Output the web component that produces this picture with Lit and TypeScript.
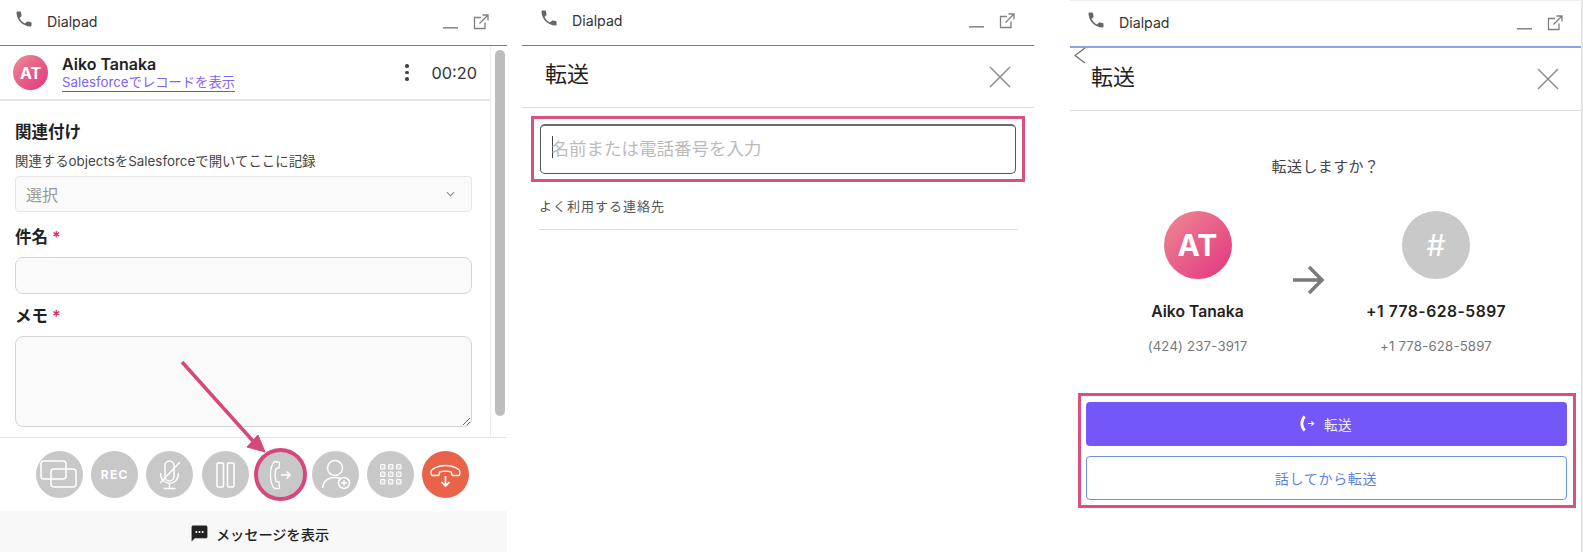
import { LitElement, html, css, svg } from "lit";
import { customElement } from "lit/decorators.js";

const phoneIcon = svg`<path d="M6.62 10.79c1.44 2.83 3.76 5.14 6.59 6.59l2.2-2.2c.27-.27.67-.36 1.02-.24 1.12.37 2.33.57 3.57.57.55 0 1 .45 1 1V20c0 .55-.45 1-1 1-9.39 0-17-7.61-17-17 0-.55.45-1 1-1h3.5c.55 0 1 .45 1 1 0 1.25.2 2.45.57 3.57.11.35.03.74-.25 1.02l-2.2 2.2z" fill="#666"/>`;

const titleBar = (cls: string) => html`
  <header class="titlebar ${cls}">
    <svg class="ph" viewBox="0 0 24 24" width="20" height="20">${phoneIcon}</svg>
    <span class="appname">Dialpad</span>
    <svg class="min" viewBox="0 0 15 3" width="15" height="3"><rect width="15" height="1.6" y="1" fill="#8a8a8a"/></svg>
    <svg class="ext" viewBox="0 0 16 16" width="16" height="16" fill="none" stroke="#808080" stroke-width="1.3">
      <path d="M8 3.5H1.5v11h10.5V8.5"/><path d="M6.5 9.5 14.5 1.5M9.5 1h5.5v5.5"/>
    </svg>
  </header>`;

const closeIcon = html`<svg class="close" viewBox="0 0 22 22" width="22" height="22" fill="none" stroke="#8c8c8c" stroke-width="1.5"><path d="M1 1 21 21M21 1 1 21"/></svg>`;

const ctrlIcons = [
  svg`<g fill="none" stroke="#fff" stroke-width="1.5"><rect x="5" y="10" width="25" height="18" rx="3"/><rect x="15" y="18" width="25" height="18" rx="3"/></g>`,
  null,
  svg`<g fill="none" stroke="#fff" stroke-width="1.4"><rect x="19" y="10" width="9" height="20" rx="4.5"/><path d="M14.5 22c0 14 18 14 18 0M23.5 32v5M17.5 37.5h12M14 32 34 11"/></g>`,
  svg`<g fill="none" stroke="#fff" stroke-width="1.5"><rect x="15" y="12" width="6.5" height="24" rx="1"/><rect x="25.5" y="12" width="6.5" height="24" rx="1"/></g>`,
  svg`<g fill="none" stroke="#fff" stroke-width="1.3"><path d="M21 11 17.5 10.5C15 13 13.5 18 13.5 24S15 35 17.5 37.5L21 37.5 22.5 37 22 31 19 30.5C18 27 18 21 19 17.5L22 17 22.5 11.5Z"/></g><path d="M24 24H33M29.5 20.5 33 24 29.5 27.5" fill="none" stroke="#fff" stroke-width="1.6"/>`,
  svg`<g fill="none" stroke="#fff" stroke-width="1.5"><circle cx="23" cy="17" r="7.5"/><path d="M10.5 37c1-7 6-10.5 12.5-10.5 2 0 4 .4 5.5 1"/><circle cx="32" cy="32" r="5.5"/><path d="M32 29.2v5.6M29.2 32h5.6"/></g>`,
  svg`<g fill="#fff" fill-opacity=".3" stroke="#fff" stroke-width="1.1">${[13.5, 21, 28.5].flatMap((y) => [13.5, 21.5, 29.5].map((x) => svg`<rect x="${x}" y="${y}" width="4.5" height="4.5" rx="1"/>`))}</g>`,
  svg`<g fill="none" stroke="#fff" stroke-width="1.4"><path d="M9 21c0-3 7-6.5 14.5-6.5S38 18 38 21c0 2-.5 3.5-1.5 3.5H31c-1 0-1.5-1-1.5-3.5-4-1.2-8-1.2-12 0 0 2.5-.5 3.5-1.5 3.5H10.5C9.5 24.5 9 23 9 21Z"/></g><path d="M23.5 25v10M19.5 31l4 4 4-4" fill="none" stroke="#fff" stroke-width="1.7"/>`,
];

@customElement("app-root")
export class AppRoot extends LitElement {
  static styles = css`
    :host {
      display: flex;
      width: 1583px;
      height: 552px;
      overflow: hidden;
      position: relative;
      background: #fff;
      font-family: Inter, "Noto Sans CJK JP", sans-serif;
      color: #222;
    }
    * { box-sizing: border-box; }
    .panel { display: flex; flex-direction: column; height: 552px; min-width: 0; flex: none; position: relative; }
    .p1 { width: 507px; }
    .p2 { width: 512px; margin-left: 15px; }
    .p3 { width: 513px; margin-left: 36px; border-top: 1px solid #eee; border-right: 2px solid #e4e4e4; }

    .titlebar { display: flex; align-items: center; flex: none; border-bottom: 1px solid #4f7fdc; position: relative; }
    .tb1 { height: 46px; padding: 0 18px 0 14px; }
    .tb2 { height: 46px; padding: 0 19px 2px 17px; }
    .tb3 { height: 47px; padding: 0 18px 0 16px; border-bottom: 2px solid #86a5e3; }
    .ph { flex: none; margin-top: -7px; }
    .appname { font-size: 14.2px; color: #333; margin: -2px 0 0 13px; flex: 1; }
    .min { margin-right: 15px; margin-top: 9px; }
    .ext { margin-top: -2px; }

    .workspace { display: flex; height: 391px; flex: none; }
    .main { flex: 1; min-width: 0; display: flex; flex-direction: column; }
    .scroll { width: 17px; flex: none; border-left: 1px solid #ececec; padding: 4px 0 0 4px; }
    .thumb { width: 10px; height: 366px; border-radius: 5px; background: #bdbdbd; }

    .callrow { height: 55px; flex: none; display: flex; align-items: center; padding: 0 13px; border-bottom: 2px solid #e6e6e6; }
    .avatar { border-radius: 50%; display: flex; align-items: center; justify-content: center; color: #fff; font-weight: 700; background: linear-gradient(135deg, #ee8a92, #e2347f); flex: none; }
    .a-sm { width: 35px; height: 35px; font-size: 16px; }
    .who { margin-left: 14px; flex: 1; display: flex; flex-direction: column; }
    .who b { font-size: 16px; line-height: 20px; margin-top: 1px; font-weight: 600; color: #222; }
    .who a { font-size: 13.3px; line-height: 17px; color: #7f63f5; border-bottom: 1px solid #6a4df5; align-self: flex-start; }
    .dots { display: flex; flex-direction: column; gap: 3px; margin-right: 23px; }
    .dots i { width: 3.5px; height: 3.5px; border-radius: 50%; background: #444; display: block; }
    .time { font-size: 16.3px; color: #333; }

    .form { padding: 21px 18px 0 15px; display: flex; flex-direction: column; }
    .lab { font-size: 16.5px; font-weight: 600; line-height: 20px; color: #222; }
    .lab em { color: #d92d5c; font-style: normal; margin-left: 4px; font-size: 16px; }
    .sub { font-size: 13.4px; line-height: 18px; margin-top: 10px; color: #444; white-space: nowrap; }
    .select { height: 36px; margin-top: 6px; border: 1px solid #e6e6e6; background: #fafafa; border-radius: 4px; display: flex; align-items: center; justify-content: space-between; padding: 0 16px 0 10px; font-size: 16px; color: #999; }
    .inp { height: 37px; margin-top: 10px; border: 1px solid #d4d4d4; background: #fafafa; border-radius: 8px; display: block; width: 100%; outline: none; }
    .lab-a { margin-top: 15px; }
    .lab-b { margin-top: 12px; }
    textarea.inp { height: 91px; margin-top: 10px; resize: both; }

    .controls { flex: none; height: 60px; border-top: 1px solid #e4e4e4; display: flex; align-items: flex-start; gap: 8.2px; padding: 13px 0 0 36px; }
    .cb { width: 47px; height: 47px; border-radius: 50%; background: #c8c8c8; flex: none; display: flex; align-items: center; justify-content: center; color: #fff; font-size: 12px; font-weight: 700; letter-spacing: 1.2px; }
    .cb.red { background: #e8634a; }
    .cb.hl { outline: 4px solid #d5487e; outline-offset: -1px; }
    .footer { flex: none; height: 41px; margin-top: 14px; background: #f8f8f8; display: flex; align-items: center; justify-content: center; gap: 7px; font-size: 14.2px; font-weight: 500; color: #222; padding: 4px 0 0 12px; }
    .arrow { position: absolute; left: 170px; top: 350px; pointer-events: none; }

    .dlghead { flex: none; display: flex; align-items: center; justify-content: space-between; border-bottom: 1px solid #dedede; }
    .p2 .dlghead { height: 62px; padding: 0 23px 0 23px; }
    .p3 .dlghead { height: 63px; padding: 0 22px 0 21px; }
    .dlghead h2 { font-size: 22px; font-weight: 400; margin: 0; color: #222; }
    .p2 .dlghead h2 { margin-top: -10px; }
    .p3 .dlghead h2 { margin-top: -8px; }
    .pinkbox { border: 3.5px solid #d84f80; background: #fff; }
    .searchbox { margin: 8px 9px 0 9px; padding: 5px 6px 5px 5.5px; }
    .search { height: 50px; border: 1px solid #555; border-top: 2px solid #6a6a6a; border-radius: 5px; display: flex; align-items: center; padding: 0 0 5px 11px; font-size: 17.5px; color: #bbb; }
    .caret { width: 1px; height: 22px; background: #444; margin-right: -1px; }
    .freq { margin: 0 16px 0 17px; height: 48px; border-bottom: 1px solid #dedede; display: flex; align-items: center; font-size: 13px; color: #555; letter-spacing: 1px; }

    .back { position: absolute; left: 3px; top: 46px; }
    .ask { text-align: center; font-size: 15px; color: #444; margin: 46px 0 0 0; line-height: 20px; letter-spacing: .4px; }
    .parties { display: flex; margin-top: 34px; padding-left: 33.5px; }
    .party { display: flex; flex-direction: column; align-items: center; }
    .pa { width: 188px; }
    .pb { width: 225px; }
    .a-lg { width: 68px; height: 68px; font-size: 30px; }
    .hash { background: #c9c9c9; font-weight: 400; font-size: 30px; }
    .party b { font-size: 15.7px; line-height: 20px; font-weight: 600; margin-top: 23px; white-space: nowrap; color: #222; }
    .pb b { letter-spacing: .5px; }
    .party span { font-size: 13.2px; line-height: 18px; margin-top: 15px; color: #777; white-space: nowrap; letter-spacing: .2px; }
    .midgap { display: flex; width: 32px; flex: none; align-items: flex-start; padding-top: 53px; }
    .btnbox { margin: 38px 5px 0 8px; padding: 5.5px 6.5px 5.5px 4.5px; display: flex; flex-direction: column; gap: 10px; }
    .btn { height: 44px; border-radius: 4px; display: flex; align-items: center; justify-content: center; gap: 9px; font-size: 13.5px; letter-spacing: .6px; }
    .primary { background: #7556f6; color: #eee; }
    .ghost { border: 1px solid #6f8fe8; color: #5f83e4; font-size: 14px; letter-spacing: .7px; }
  `;

  render() {
    return html`
      <section class="panel p1">
        ${titleBar("tb1")}
        <div class="workspace">
          <div class="main">
            <div class="callrow">
              <div class="avatar a-sm">AT</div>
              <div class="who"><b>Aiko Tanaka</b><a>Salesforceでレコードを表示</a></div>
              <div class="dots"><i></i><i></i><i></i></div>
              <div class="time">00:20</div>
            </div>
            <div class="form">
              <div class="lab">関連付け</div>
              <div class="sub">関連するobjectsをSalesforceで開いてここに記録</div>
              <div class="select">選択
                <svg viewBox="0 0 10 6" width="9" height="6" fill="none" stroke="#888" stroke-width="1.2"><path d="M1 1 5 5 9 1"/></svg>
              </div>
              <div class="lab lab-a">件名<em>*</em></div>
              <input class="inp" />
              <div class="lab lab-b">メモ<em>*</em></div>
              <textarea class="inp"></textarea>
            </div>
          </div>
          <div class="scroll"><div class="thumb"></div></div>
        </div>
        <div class="controls">
          ${ctrlIcons.map((ic, i) => html`
            <div class="cb ${i === 7 ? "red" : ""} ${i === 4 ? "hl" : ""}">
              ${ic ? html`<svg viewBox="0 0 47 47" width="47" height="47">${ic}</svg>` : "REC"}
            </div>`)}
        </div>
        <div class="footer">
          <svg viewBox="0 0 24 24" width="19" height="19"><path d="M20 2H4c-1.1 0-2 .9-2 2v18l4-4h14c1.1 0 2-.9 2-2V4c0-1.1-.9-2-2-2z" fill="#222"/><g fill="#fff"><circle cx="8" cy="10" r="1.3"/><circle cx="12" cy="10" r="1.3"/><circle cx="16" cy="10" r="1.3"/></g></svg>
          メッセージを表示
        </div>
        <svg class="arrow" width="110" height="110" viewBox="0 0 110 110">
          <path d="M12 12 83 91" stroke="#d5487e" stroke-width="3.5" fill="none"/>
          <path d="M77 97 88 85 95 102Z" fill="#d5487e" stroke="#d5487e" stroke-width="1"/>
        </svg>
      </section>

      <section class="panel p2">
        ${titleBar("tb2")}
        <div class="dlghead"><h2>転送</h2>${closeIcon}</div>
        <div class="pinkbox searchbox">
          <div class="search"><span class="caret"></span>名前または電話番号を入力</div>
        </div>
        <div class="freq">よく利用する連絡先</div>
      </section>

      <section class="panel p3">
        ${titleBar("tb3")}
        <svg class="back" width="14" height="18" viewBox="0 0 14 18" fill="none" stroke="#666" stroke-width="1.1"><path d="M12 1 2 8.5 12 16"/></svg>
        <div class="dlghead"><h2>転送</h2>${closeIcon}</div>
        <div class="ask">転送しますか？</div>
        <div class="parties">
          <div class="party pa">
            <div class="avatar a-lg">AT</div>
            <b>Aiko Tanaka</b>
            <span>(424) 237-3917</span>
          </div>
          <div class="midgap">
            <svg viewBox="0 0 32 32" width="32" height="32" fill="none" stroke="#7a7a7a" stroke-width="3.4"><path d="M1 16H30M17 3 30 16 17 29"/></svg>
          </div>
          <div class="party pb">
            <div class="avatar a-lg hash">#</div>
            <b>+1 778-628-5897</b>
            <span>+1 778-628-5897</span>
          </div>
        </div>
        <div class="pinkbox btnbox">
          <div class="btn primary">
            <svg viewBox="0 0 16 18" width="15" height="17" fill="none" stroke="#fff"><path d="M5 1.5C2.5 4 2 7 2 9s.5 5 3 7.5" stroke-width="3"/><path d="M8.5 9h6M12 6.8l2.5 2.2-2.5 2.2" stroke-width="1.2"/></svg>
            転送
          </div>
          <div class="btn ghost">話してから転送</div>
        </div>
      </section>
    `;
  }
}
